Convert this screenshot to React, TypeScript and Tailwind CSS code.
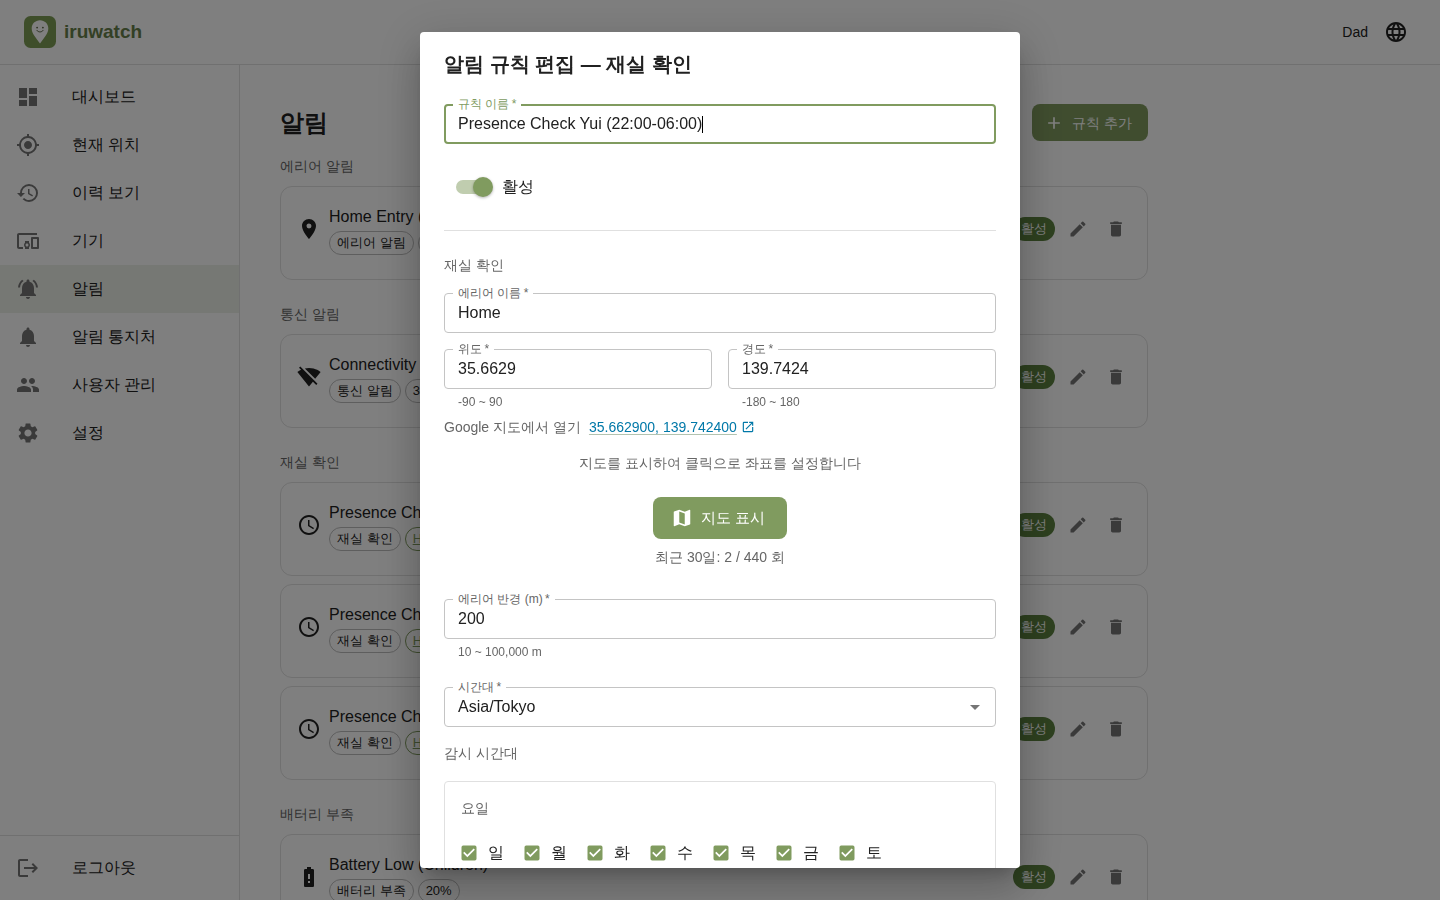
import { useState } from "react";
import type { ReactNode } from "react";
import type { IconType } from "react-icons";
import {
  MdAccessTime,
  MdAdd,
  MdArrowDropDown,
  MdBatteryAlert,
  MdCheckBox,
  MdDashboard,
  MdDelete,
  MdDevicesOther,
  MdEdit,
  MdHistory,
  MdLanguage,
  MdLocationOn,
  MdMap,
  MdMyLocation,
  MdNotifications,
  MdNotificationsActive,
  MdOpenInNew,
  MdPeople,
  MdSettings,
  MdSignalWifiOff,
} from "react-icons/md";

function LogoutIcon() {
  return (
    <svg viewBox="0 0 24 24" className="size-6" fill="currentColor" aria-hidden="true">
      <path d="m17 7-1.41 1.41L18.17 11H8v2h10.17l-2.58 2.58L17 17l5-5zM4 5h8V3H4c-1.1 0-2 .9-2 2v14c0 1.1.9 2 2 2h8v-2H4z" />
    </svg>
  );
}

function Logo() {
  return (
    <svg viewBox="0 0 32 32" className="size-8" aria-hidden="true">
      <rect width="32" height="32" rx="6.5" fill="#7d9c55" />
      <path
        d="M16 4.2c-4.7 0-8.3 3.6-8.3 8.2 0 5.200 4.300 9 8.300 15.100 4-6.100 8.300-9.900 8.300-15.100 0-4.600-3.600-8.200-8.300-8.200z"
        fill="#fff"
      />
      <circle cx="13.1" cy="11.6" r="0.9" fill="#55603f" />
      <circle cx="18.9" cy="11.6" r="0.9" fill="#55603f" />
      <path d="M12.8 14.3c1.500 2.300 4.900 2.300 6.400 0" fill="none" stroke="#55603f" strokeWidth="0.9" strokeLinecap="round" />
    </svg>
  );
}

const navItems: { label: string; icon: IconType; active?: boolean }[] = [
  { label: "대시보드", icon: MdDashboard },
  { label: "현재 위치", icon: MdMyLocation },
  { label: "이력 보기", icon: MdHistory },
  { label: "기기", icon: MdDevicesOther },
  { label: "알림", icon: MdNotificationsActive, active: true },
  { label: "알림 통지처", icon: MdNotifications },
  { label: "사용자 관리", icon: MdPeople },
  { label: "설정", icon: MdSettings },
];

type Rule = { id: number; title: string; place?: string; value?: string };

const presenceRules: Rule[] = [
  { id: 3, title: "Presence Check", place: "Home" },
  { id: 4, title: "Presence Check", place: "Home" },
  { id: 5, title: "Presence Check", place: "Home" },
];

const sections: { name: string; icon: IconType; rules: Rule[] }[] = [
  { name: "에리어 알림", icon: MdLocationOn, rules: [{ id: 1, title: "Home Entry (Children)", value: "Home" }] },
  { name: "통신 알림", icon: MdSignalWifiOff, rules: [{ id: 2, title: "Connectivity", value: "30분" }] },
  { name: "재실 확인", icon: MdAccessTime, rules: presenceRules },
  { name: "배터리 부족", icon: MdBatteryAlert, rules: [{ id: 6, title: "Battery Low (Children)", value: "20%" }] },
];

function Chip({ children }: { children: ReactNode }) {
  return (
    <span className="flex h-6 items-center rounded-full border border-[#bdbdbd] px-[7px] text-[13px]">{children}</span>
  );
}

function RuleCard({ rule, kind, icon: Icon }: { rule: Rule; kind: string; icon: IconType }) {
  return (
    <li className="flex items-center gap-2 rounded-xl border border-[#e0e0e0] px-4 pt-4 pb-6">
      <Icon className="size-6 shrink-0" />
      <div className="flex-1">
        <h3 className="text-base leading-7">{rule.title}</h3>
        <div className="flex gap-1">
          <Chip>{kind}</Chip>
          {rule.place && (
            <a
              href="#place"
              className="flex h-6 items-center rounded-full border border-[#809b5f] px-[7px] text-[13px] text-[#809b5f] underline"
            >
              {rule.place}
            </a>
          )}
          {rule.value && <Chip>{rule.value}</Chip>}
        </div>
      </div>
      <span className="flex h-6 items-center rounded-full bg-[#5c823f] px-2 text-[13px] text-white">활성</span>
      <button type="button" aria-label="편집" className="p-[5px] text-[#757575]">
        <MdEdit className="size-5" />
      </button>
      <button type="button" aria-label="삭제" className="p-[5px] text-[#757575]">
        <MdDelete className="size-5" />
      </button>
    </li>
  );
}

function FieldLabel({ id, children, focused }: { id: string; children: ReactNode; focused?: boolean }) {
  return (
    <label
      htmlFor={id}
      className={`absolute -top-2 left-[9px] z-10 bg-white px-[5px] text-xs leading-4 whitespace-nowrap ${
        focused ? "text-[#809b5f]" : "text-[#666666]"
      }`}
    >
      {children}&thinsp;*
    </label>
  );
}

function TextField({
  id,
  label,
  initial,
  focused,
  helper,
}: {
  id: string;
  label: string;
  initial: string;
  focused?: boolean;
  helper?: string;
}) {
  const [value, setValue] = useState(initial);
  return (
    <div>
      <div className="relative">
        <FieldLabel id={id} focused={focused}>
          {label}
        </FieldLabel>
        <input
          id={id}
          value={value}
          onChange={(e) => setValue(e.target.value)}
          className={`block h-10 w-full rounded bg-white text-base outline-none ${
            focused ? "border-2 border-[#809b5f] px-3 caret-transparent" : "border border-[#c4c4c4] px-[13px]"
          }`}
        />
        {focused && <span className="absolute top-3 left-[258px] h-[17px] w-px bg-black" />}
      </div>
      {helper && <p className="mt-[3px] px-3.5 text-xs leading-5 text-[#666666]">{helper}</p>}
    </div>
  );
}

function DayCheckbox({ day }: { day: string }) {
  const [checked, setChecked] = useState(true);
  return (
    <label className="flex items-center gap-[9px] text-base leading-6">
      <span className="relative flex size-5">
        <input
          type="checkbox"
          checked={checked}
          onChange={(e) => setChecked(e.target.checked)}
          className="absolute inset-0 m-0 size-5 opacity-0"
        />
        <MdCheckBox className={`size-5 ${checked ? "text-[#809b5f]" : "text-[#bdbdbd]"}`} />
      </span>
      {day}
    </label>
  );
}

function EnabledSwitch() {
  const [on, setOn] = useState(true);
  return (
    <label className="flex w-fit items-center gap-2 pl-3 text-base leading-6">
      <span className="relative flex h-5 w-[38px] items-center">
        <input
          type="checkbox"
          role="switch"
          checked={on}
          onChange={(e) => setOn(e.target.checked)}
          className="absolute inset-0 z-10 m-0 opacity-0"
        />
        <span className="h-3.5 w-[34px] rounded-full bg-[#c0cdaf]" />
        <span
          className={`absolute top-0 size-5 rounded-full bg-[#809b5f] shadow-[0_1px_3px_rgba(0,0,0,0.3)] ${
            on ? "left-[17px]" : "-left-[3px]"
          }`}
        />
      </span>
      활성
    </label>
  );
}

function EditDialog() {
  return (
    <div
      role="dialog"
      aria-modal="true"
      aria-labelledby="dialog-title"
      className="flex max-h-full w-full max-w-[600px] flex-col overflow-hidden rounded bg-white shadow-[0_11px_15px_-7px_rgba(0,0,0,0.2),0_24px_38px_3px_rgba(0,0,0,0.14),0_9px_46px_8px_rgba(0,0,0,0.12)]"
    >
      <h2 id="dialog-title" className="px-6 py-4 text-xl leading-8 font-bold">
        알림 규칙 편집 — 재실 확인
      </h2>
      <form className="min-h-0 flex-1 overflow-y-auto px-6 pt-2 pb-6 [scrollbar-width:none]">
        <TextField id="rule-name" label="규칙 이름" initial="Presence Check Yui (22:00-06:00)" focused />
        <div className="mt-[31px]">
          <EnabledSwitch />
        </div>
        <hr className="mt-[31px] border-[#e0e0e0]" />

        <h3 className="mt-6 text-sm leading-5 text-[#666666]">재실 확인</h3>
        <div className="mt-[18px] flex flex-col gap-4">
          <TextField id="area-name" label="에리어 이름" initial="Home" />
          <div className="grid grid-cols-2 gap-4">
            <TextField id="lat" label="위도" initial="35.6629" helper="-90 ~ 90" />
            <TextField id="lng" label="경도" initial="139.7424" helper="-180 ~ 180" />
          </div>
        </div>

        <div className="mt-[5px] flex items-center gap-2 text-sm leading-5 text-[#666666]">
          <span>Google 지도에서 열기</span>
          <a href="#map" className="flex items-center gap-1 text-[#0078a8]">
            <span className="underline decoration-[#b3c3b0] underline-offset-2">35.662900, 139.742400</span>
            <MdOpenInNew className="size-3.5" />
          </a>
        </div>

        <div className="mt-4 flex flex-col items-center text-sm leading-5 text-[#666666]">
          <p>지도를 표시하여 클릭으로 좌표를 설정합니다</p>
          <button
            type="button"
            className="mt-6 flex h-[42px] items-center gap-2 rounded-lg bg-[#809b5f] pr-[22px] pl-[18px] text-[15px] text-white"
          >
            <MdMap className="size-[22px]" />
            지도 표시
          </button>
          <p className="mt-2">최근 30일: 2 / 440 회</p>
        </div>

        <div className="mt-8 flex flex-col gap-[25px]">
          <TextField id="radius" label="에리어 반경 (m)" initial="200" helper="10 ~ 100,000 m" />
          <div className="relative">
            <FieldLabel id="tz">시간대</FieldLabel>
            <select
              id="tz"
              defaultValue="Asia/Tokyo"
              className="block h-10 w-full appearance-none rounded border border-[#c4c4c4] bg-white px-[13px] text-base"
            >
              <option>Asia/Tokyo</option>
              <option>Asia/Seoul</option>
            </select>
            <MdArrowDropDown className="pointer-events-none absolute top-2 right-[9px] size-6 text-[#757575]" />
          </div>
        </div>

        <h3 className="mt-4 text-sm leading-5 text-[#666666]">감시 시간대</h3>
        <fieldset className="mt-[18px] rounded border border-[#e0e0e0] px-4 pt-4 pb-10">
          <p className="text-sm leading-5 text-[#666666]">요일</p>
          <div className="mt-[23px] -ml-0.5 flex flex-wrap gap-x-[18px] gap-y-4">
            {["일", "월", "화", "수", "목", "금", "토"].map((d) => (
              <DayCheckbox key={d} day={d} />
            ))}
          </div>
        </fieldset>
      </form>
    </div>
  );
}

export default function App() {
  return (
    <div className="flex h-screen flex-col overflow-hidden bg-white font-['Liberation_Sans',sans-serif] text-[#212121]">
      <header className="flex h-[65px] shrink-0 items-center justify-between border-b border-[#e0e0e0] px-6">
        <a href="#home" className="flex items-center gap-2">
          <Logo />
          <span className="text-[19px] leading-8 font-bold text-[#66804a]">iruwatch</span>
        </a>
        <div className="flex items-center gap-2 text-sm">
          <span>Dad</span>
          <button type="button" aria-label="언어" className="p-2">
            <MdLanguage className="size-6" />
          </button>
        </div>
      </header>

      <div className="flex min-h-0 flex-1">
        <aside className="flex w-60 shrink-0 flex-col justify-between border-r border-[#e0e0e0]">
          <nav className="py-2">
            {navItems.map(({ label, icon: Icon, active }) => (
              <a
                key={label}
                href="#nav"
                className={`flex h-12 items-center gap-8 px-4 text-base ${active ? "bg-[#edf0e9]" : ""}`}
              >
                <Icon className="size-6 text-[#757575]" />
                {label}
              </a>
            ))}
          </nav>
          <div className="border-t border-[#e0e0e0] py-2">
            <button type="button" className="flex h-12 w-full items-center gap-8 px-4 text-base">
              <span className="text-[#757575]">
                <LogoutIcon />
              </span>
              로그아웃
            </button>
          </div>
        </aside>

        <main className="min-w-0 flex-1 overflow-hidden px-10 pt-[39px]">
          <div className="max-w-[868px]">
            <div className="mb-[15px] flex items-center justify-between">
              <h1 className="text-2xl leading-8 font-bold">알림</h1>
              <button
                type="button"
                className="flex h-[37px] items-center gap-2 rounded-lg bg-[#809b5f] pr-4 pl-3 text-sm text-white"
              >
                <MdAdd className="size-5" />
                규칙 추가
              </button>
            </div>
            <div className="flex flex-col gap-6">
              {sections.map((s) => (
                <section key={s.name}>
                  <h2 className="mb-[10px] text-sm leading-5 text-[#666666]">{s.name}</h2>
                  <ul className="flex flex-col gap-2">
                    {s.rules.map((r) => (
                      <RuleCard key={r.id} rule={r} kind={s.name} icon={s.icon} />
                    ))}
                  </ul>
                </section>
              ))}
            </div>
          </div>
        </main>
      </div>

      <div className="fixed inset-0 z-20 flex items-center justify-center bg-black/50 p-8">
        <EditDialog />
      </div>
    </div>
  );
}
